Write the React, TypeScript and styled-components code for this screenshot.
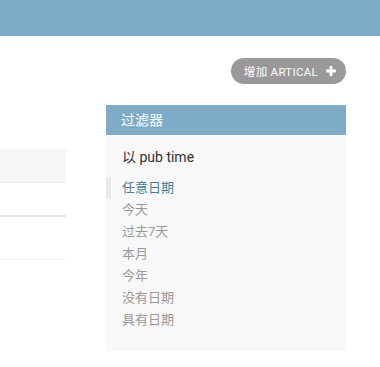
import React from "react";
import styled, { createGlobalStyle } from "styled-components";

const Global = createGlobalStyle`
  html, body { margin: 0; padding: 0; background: #fff; }
  body { font-family: Roboto, "Noto Sans CJK SC", sans-serif; color: #333; }
  * { box-sizing: border-box; }
`;

const Header = styled.div`
  height: 36px;
  background: #7eacc8;
`;

const Content = styled.div`
  padding: 22px 34px 0 0;
`;

const ToolRow = styled.div`
  display: flex;
  justify-content: flex-end;
`;

const AddButton = styled.a`
  display: flex;
  align-items: center;
  height: 26px;
  padding: 0 10px 0 13px;
  background: #999;
  color: #fff;
  border-radius: 15px;
  font-size: 11.5px;
  letter-spacing: 0.3px;
  text-transform: uppercase;
  text-decoration: none;
  gap: 8px;
  cursor: pointer;
`;

const Main = styled.div`
  display: flex;
  margin-top: 21px;
  gap: 40px;
`;

const LeftCol = styled.div`
  width: 66px;
  padding-top: 45px;
`;

const Row = styled.div<{ $h: number; $bg?: string; $bt?: boolean; $bb: number; $bc?: string }>`
  height: ${(p) => p.$h}px;
  background: ${(p) => p.$bg || "#fff"};
  border-top: ${(p) => (p.$bt ? "1px solid #eee" : "none")};
  border-bottom: ${(p) => p.$bb}px solid ${(p) => p.$bc || "#eee"};
  box-sizing: content-box;
`;

const Filter = styled.div`
  width: 240px;
  background: #f8f8f8;
  padding-bottom: 20px;
`;

const FilterTitle = styled.h2`
  margin: 0 0 13px;
  height: 30px;
  line-height: 30px;
  padding: 0 15px;
  background: #7eacc8;
  color: #fff;
  font-size: 14px;
  font-weight: 400;
`;

const FilterSub = styled.h3`
  margin: 0 0 11px;
  padding: 0 16px;
  font-size: 14px;
  line-height: 18px;
  font-weight: 400;
  color: #333;
`;

const List = styled.ul`
  list-style: none;
  margin: 0;
  padding: 0;
`;

const Item = styled.li<{ $selected?: boolean }>`
  height: 22px;
  line-height: 22px;
  font-size: 13px;
  padding-left: ${(p) => (p.$selected ? 11 : 16)}px;
  border-left: ${(p) => (p.$selected ? "5px solid #eaeaea" : "none")};
  color: ${(p) => (p.$selected ? "#447e9b" : "#999")};
`;

const items = ["任意日期", "今天", "过去7天", "本月", "今年", "没有日期", "具有日期"];

const Plus = () => (
  <svg width="10" height="10" viewBox="0 0 10 10">
    <rect x="3.6" y="0" width="2.8" height="10" rx="0.6" fill="#fff" />
    <rect x="0" y="3.6" width="10" height="2.8" rx="0.6" fill="#fff" />
  </svg>
);

export default function App() {
  return (
    <>
      <Global />
      <Header />
      <Content>
        <ToolRow>
          <AddButton>
            <span>增加 Artical</span>
            <Plus />
          </AddButton>
        </ToolRow>
        <Main>
          <LeftCol>
            <Row $h={31} $bg="#f6f6f6" $bt $bb={1} />
            <Row $h={32} $bb={2} $bc="#e4e4e4" />
            <Row $h={42} $bb={1} />
          </LeftCol>
          <Filter>
            <FilterTitle>过滤器</FilterTitle>
            <FilterSub>以 pub time</FilterSub>
            <List>
              {items.map((t, i) => (
                <Item key={t} $selected={i === 0}>
                  {t}
                </Item>
              ))}
            </List>
          </Filter>
        </Main>
      </Content>
    </>
  );
}
